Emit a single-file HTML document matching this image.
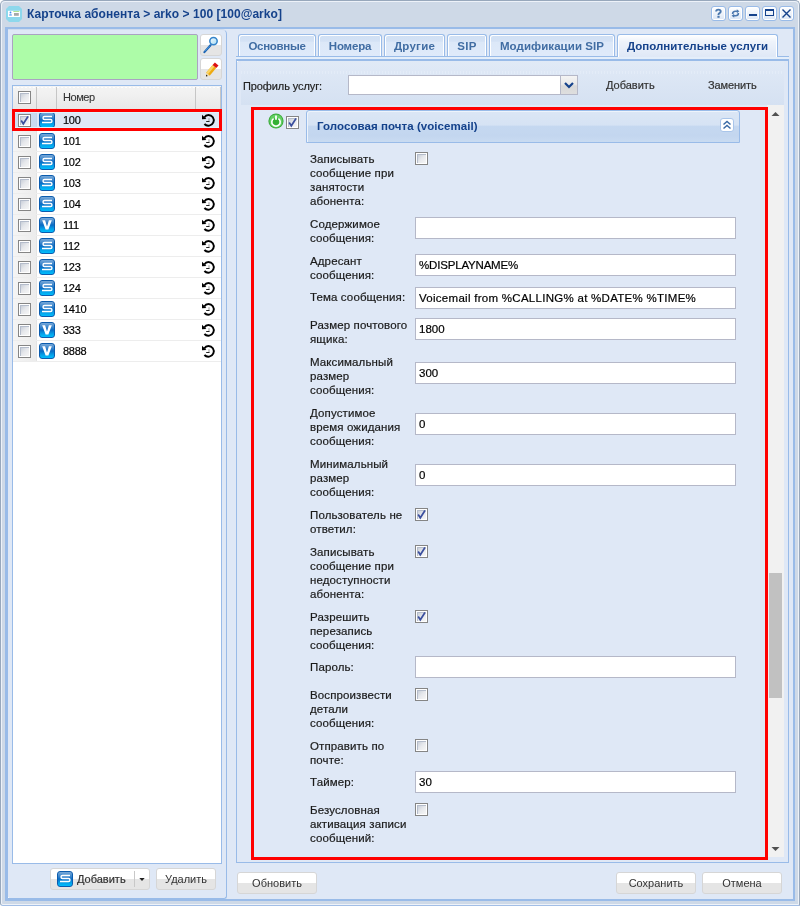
<!DOCTYPE html><html><head><meta charset="utf-8"><style>
*{box-sizing:border-box;margin:0;padding:0}
html,body{width:800px;height:906px;overflow:hidden;background:#fff}
body{font-family:"Liberation Sans",sans-serif;font-size:11px;color:#000;position:relative}
.a{position:absolute}
.t{position:absolute;white-space:nowrap;line-height:14px;will-change:transform;-webkit-text-stroke:0.2px currentColor}
.b{font-weight:bold;-webkit-text-stroke:0}
.cb{position:absolute;width:13px;height:13px;border:1px solid #858585;background:#fff}
.cb::after{content:'';position:absolute;left:1px;top:1px;width:9px;height:9px;box-sizing:border-box;border-top:1px solid #b4bccb;border-left:1px solid #b4bccb;background:linear-gradient(135deg,#c9cfd9 0%,#e6e8ec 45%,#f6f6f6 100%)}
.fld{position:absolute;height:22px;background:#fff;border:1px solid #b5b8c8}
.btn{position:absolute;will-change:transform;height:22px;border:1px solid #d6d6d6;border-radius:3px;background:linear-gradient(#fff 0,#fff 50%,#e5e5e5 50%,#e5e5e5 100%);color:#333;line-height:20px;text-align:center;white-space:nowrap}
.tb{position:absolute;width:15px;height:15px;top:6px;border:1px solid #99bbe8;border-radius:3px;background:linear-gradient(#fff,#dbe6f5);box-shadow:inset 0 0 0 1px #fff}
.tab{position:absolute;will-change:transform;top:34px;height:22px;border:1px solid #99bbe8;border-bottom:none;border-radius:3px 3px 0 0;background:linear-gradient(#d1e0f4 0,#d4e2f5 30%,#dce8f8 34%,#dfeafa 100%);box-shadow:inset 1px 1px 0 #fff,inset -1px 0 0 #fff;color:#416da3;font-weight:bold;text-align:center;line-height:22px;white-space:nowrap}
</style></head><body>
<div class="a" style="left:0;top:0;width:800px;height:906px;background:#ced9e7;border:1px solid #98a8bc;border-bottom-color:#a2bee6;border-radius:5px 5px 0 3px"></div>
<div class="a" style="left:1px;top:1px;width:798px;height:904px;border:1px solid #edf2f9;border-radius:4px 4px 0 2px"></div>
<svg class="a" style="left:6px;top:6px" width="16" height="16" viewBox="0 0 16 16"><path d="M3 0H13L16 3V13L13 16H3L0 13V3Z" fill="#8dd8ec"/><rect x="2" y="4.8" width="12" height="6.2" fill="#fff"/><circle cx="4.5" cy="6.4" r="0.9" fill="#3f8ff0"/><path d="M3.1 9.8Q3.1 7.6 4.5 7.6Q5.9 7.6 5.9 9.8Z" fill="#7fb2f5"/><rect x="7.3" y="5.1" width="6" height="0.9" fill="#a6e28a"/><rect x="8" y="7" width="4.8" height="2.8" fill="#a8a8a8"/></svg>
<div class="t b" style="left:27px;top:7px;font-size:12px;color:#15428b;letter-spacing:0.04px">Карточка абонента &gt; arko &gt; 100 [100@arko]</div>
<div class="tb" style="left:711px"></div>
<div class="tb" style="left:728px"></div>
<div class="tb" style="left:745px"></div>
<div class="tb" style="left:762px"></div>
<div class="tb" style="left:779px"></div>
<svg class="a" style="left:711px;top:6px" width="15" height="15" viewBox="0 0 15 15"><path d="M5.1 5.6Q5.1 3.6 7.4 3.6Q9.7 3.6 9.7 5.4Q9.7 6.5 8.5 7.1Q7.5 7.6 7.5 8.6V9.2" fill="none" stroke="#4b78ae" stroke-width="1.9"/><rect x="6.4" y="10" width="2.2" height="1.8" fill="#4b78ae"/></svg>
<svg class="a" style="left:728px;top:6px" width="15" height="15" viewBox="0 0 15 15"><path d="M4.6 8Q4.6 5.2 7.4 5.2H9" fill="none" stroke="#4b78ae" stroke-width="1.6"/><path d="M8.8 3.2L11.4 5.2L8.8 7.2Z" fill="#4b78ae"/><path d="M10.4 7Q10.4 9.8 7.6 9.8H6" fill="none" stroke="#4b78ae" stroke-width="1.6"/><path d="M6.2 7.8L3.6 9.8L6.2 11.8Z" fill="#4b78ae"/></svg>
<div class="a" style="left:749px;top:14px;width:8px;height:2px;background:#15428b"></div>
<div class="a" style="left:765px;top:9px;width:9px;height:7px;border:1px solid #15428b;border-top-width:2px"></div>
<svg class="a" style="left:782px;top:9px" width="9" height="9" viewBox="0 0 9 9"><path d="M0.5 0.5L8.5 8.5M8.5 0.5L0.5 8.5" stroke="#15428b" stroke-width="1.4"/></svg>
<div class="a" style="left:5px;top:27px;width:790px;height:874px;background:#dfe8f6;border:solid #99bbe8;border-width:2px 2px 2px 3px"></div>
<div class="a" style="left:8px;top:29px;width:219px;height:870px;border-right:1px solid #99bbe8;border-bottom:1px solid #99bbe8;border-top:1px solid #cfdcee;border-radius:0 5px 3px 0"></div>
<div class="a" style="left:8px;top:897px;width:1px;height:1px;background:#f4f8fd"></div>
<div class="a" style="left:12px;top:34px;width:186px;height:46px;background:#adfca8;border:1px solid #aaa3c2;border-radius:2px"></div>
<div class="btn" style="left:200px;top:34px;width:22px;height:22px"></div>
<div class="btn" style="left:200px;top:58px;width:22px;height:22px"></div>
<svg class="a" style="left:198px;top:32px" width="26" height="26" viewBox="0 0 26 26"><defs><linearGradient id="lg" x1="0" y1="0" x2="1" y2="1"><stop offset="0" stop-color="#f4fbff"/><stop offset="1" stop-color="#a9dcf2"/></linearGradient></defs><circle cx="15.5" cy="9.1" r="3.7" fill="url(#lg)" stroke="#3584ca" stroke-width="1.5"/><path d="M6.4 20.1L12.5 13.3" stroke="#1a62b2" stroke-width="2.1" stroke-linecap="round"/><path d="M6.9 19.3L11.9 13.7" stroke="#5aa6e6" stroke-width="0.7"/></svg>
<svg class="a" style="left:198px;top:56px" width="26" height="26" viewBox="0 0 26 26"><path d="M8.1 16.7L11.7 19.7L18.2 12.1L14.6 9.1Z" fill="#eeaa10"/><path d="M8.1 16.7L9.9 18.2L16.4 10.6L14.6 9.1Z" fill="#f9d466"/><path d="M8 20.5L8.1 16.7L11.7 19.7Z" fill="#f1dcae"/><path d="M8 20.5L8.05 18.6L9.85 20.1Z" fill="#1a1a1a"/><path d="M14.6 9.1L18.2 12.1L20.5 9.4L16.9 6.4Z" fill="#dd1010"/></svg>
<div class="a" style="left:12px;top:85px;width:210px;height:779px;background:#fff;border:1px solid #99bbe8"></div>
<div class="a" style="left:13px;top:86px;width:208px;height:23px;background:linear-gradient(#f4f4f4,#f0f0f0 40%,#e8e8e8 100%)"></div>
<div class="a" style="left:13px;top:87px;width:208px;height:1px;background:repeating-linear-gradient(90deg,#fff 0,#fff 2px,transparent 2px,transparent 4px);opacity:0.8"></div>
<div class="a" style="left:36px;top:87px;width:1px;height:22px;background:#c6c6c6"></div>
<div class="a" style="left:56px;top:87px;width:1px;height:22px;background:#c6c6c6"></div>
<div class="a" style="left:195px;top:87px;width:1px;height:22px;background:#c6c6c6"></div>
<div class="a" style="left:220px;top:87px;width:1px;height:22px;background:#c6c6c6"></div>
<div class="cb" style="left:18px;top:91px"></div>
<div class="t" style="left:63px;top:90px;color:#333;letter-spacing:-0.45px;-webkit-text-stroke:0.1px #333">Номер</div>
<div class="a" style="left:13px;top:109px;width:208px;height:21px;background:#dfe8f6"></div>
<div class="a" style="left:13px;top:110px;width:23px;height:20px;background:linear-gradient(90deg,#cfdff2,#c9daf0)"></div>
<div class="a" style="left:36px;top:110px;width:1px;height:20px;background:#c5d6ee"></div>
<div class="a" style="left:13px;top:130px;width:208px;height:1px;background:#ededed"></div>
<div class="cb" style="left:18px;top:114px"></div><svg class="a" style="left:18px;top:114px" width="13" height="13" viewBox="0 0 13 13"><path d="M3.2 6.5L5.3 9.8L10 2.5" fill="none" stroke="#3b4f9e" stroke-width="1.7"/></svg>
<div class="a" style="left:39px;top:112px;width:16px;height:16px;border:1px solid #0b5cae;border-radius:3px;background:linear-gradient(#78a8d8 0%,#3b86cc 30%,#0a6bc4 50%,#05a2ea 78%,#00bdfc 100%);overflow:hidden"><svg width="16" height="16" viewBox="0 0 16 16" style="position:absolute;left:-1px;top:-1px"><path d="M13 4.5H5.5Q4 4.5 4 6Q4 7.5 5.5 7.5H11.5Q13 7.5 13 9Q13 10.5 11.5 10.5H3" fill="none" stroke="#fff" stroke-width="1.4"/></svg></div>
<div class="t" style="left:63px;top:113px;color:#000;letter-spacing:-0.3px">100</div>
<svg class="a" style="left:201px;top:112px" width="16" height="16" viewBox="0 0 16 16"><path d="M3.3 5.6Q4.9 2.95 7.25 2.95A5.4 5.4 0 1 1 3.4 12" fill="none" stroke="#000" stroke-width="1.9"/><path d="M1 2.8L1 7.3L5.4 6.9Z" fill="#000"/><path d="M8 6.2V9.5" fill="none" stroke="#999" stroke-width="1"/><path d="M5.2 9.5H8.5" fill="none" stroke="#222" stroke-width="1"/></svg>
<div class="a" style="left:13px;top:131px;width:208px;height:20px;background:#fff"></div>
<div class="a" style="left:13px;top:131px;width:23px;height:20px;background:linear-gradient(90deg,#f5f5f5,#ececec)"></div>
<div class="a" style="left:36px;top:131px;width:1px;height:20px;background:#e3e3e3"></div>
<div class="a" style="left:13px;top:151px;width:208px;height:1px;background:#ededed"></div>
<div class="cb" style="left:18px;top:135px"></div>
<div class="a" style="left:39px;top:133px;width:16px;height:16px;border:1px solid #0b5cae;border-radius:3px;background:linear-gradient(#78a8d8 0%,#3b86cc 30%,#0a6bc4 50%,#05a2ea 78%,#00bdfc 100%);overflow:hidden"><svg width="16" height="16" viewBox="0 0 16 16" style="position:absolute;left:-1px;top:-1px"><path d="M13 4.5H5.5Q4 4.5 4 6Q4 7.5 5.5 7.5H11.5Q13 7.5 13 9Q13 10.5 11.5 10.5H3" fill="none" stroke="#fff" stroke-width="1.4"/></svg></div>
<div class="t" style="left:63px;top:134px;color:#000;letter-spacing:-0.3px">101</div>
<svg class="a" style="left:201px;top:133px" width="16" height="16" viewBox="0 0 16 16"><path d="M3.3 5.6Q4.9 2.95 7.25 2.95A5.4 5.4 0 1 1 3.4 12" fill="none" stroke="#000" stroke-width="1.9"/><path d="M1 2.8L1 7.3L5.4 6.9Z" fill="#000"/><path d="M8 6.2V9.5" fill="none" stroke="#999" stroke-width="1"/><path d="M5.2 9.5H8.5" fill="none" stroke="#222" stroke-width="1"/></svg>
<div class="a" style="left:13px;top:152px;width:208px;height:20px;background:#fff"></div>
<div class="a" style="left:13px;top:152px;width:23px;height:20px;background:linear-gradient(90deg,#f5f5f5,#ececec)"></div>
<div class="a" style="left:36px;top:152px;width:1px;height:20px;background:#e3e3e3"></div>
<div class="a" style="left:13px;top:172px;width:208px;height:1px;background:#ededed"></div>
<div class="cb" style="left:18px;top:156px"></div>
<div class="a" style="left:39px;top:154px;width:16px;height:16px;border:1px solid #0b5cae;border-radius:3px;background:linear-gradient(#78a8d8 0%,#3b86cc 30%,#0a6bc4 50%,#05a2ea 78%,#00bdfc 100%);overflow:hidden"><svg width="16" height="16" viewBox="0 0 16 16" style="position:absolute;left:-1px;top:-1px"><path d="M13 4.5H5.5Q4 4.5 4 6Q4 7.5 5.5 7.5H11.5Q13 7.5 13 9Q13 10.5 11.5 10.5H3" fill="none" stroke="#fff" stroke-width="1.4"/></svg></div>
<div class="t" style="left:63px;top:155px;color:#000;letter-spacing:-0.3px">102</div>
<svg class="a" style="left:201px;top:154px" width="16" height="16" viewBox="0 0 16 16"><path d="M3.3 5.6Q4.9 2.95 7.25 2.95A5.4 5.4 0 1 1 3.4 12" fill="none" stroke="#000" stroke-width="1.9"/><path d="M1 2.8L1 7.3L5.4 6.9Z" fill="#000"/><path d="M8 6.2V9.5" fill="none" stroke="#999" stroke-width="1"/><path d="M5.2 9.5H8.5" fill="none" stroke="#222" stroke-width="1"/></svg>
<div class="a" style="left:13px;top:173px;width:208px;height:20px;background:#fff"></div>
<div class="a" style="left:13px;top:173px;width:23px;height:20px;background:linear-gradient(90deg,#f5f5f5,#ececec)"></div>
<div class="a" style="left:36px;top:173px;width:1px;height:20px;background:#e3e3e3"></div>
<div class="a" style="left:13px;top:193px;width:208px;height:1px;background:#ededed"></div>
<div class="cb" style="left:18px;top:177px"></div>
<div class="a" style="left:39px;top:175px;width:16px;height:16px;border:1px solid #0b5cae;border-radius:3px;background:linear-gradient(#78a8d8 0%,#3b86cc 30%,#0a6bc4 50%,#05a2ea 78%,#00bdfc 100%);overflow:hidden"><svg width="16" height="16" viewBox="0 0 16 16" style="position:absolute;left:-1px;top:-1px"><path d="M13 4.5H5.5Q4 4.5 4 6Q4 7.5 5.5 7.5H11.5Q13 7.5 13 9Q13 10.5 11.5 10.5H3" fill="none" stroke="#fff" stroke-width="1.4"/></svg></div>
<div class="t" style="left:63px;top:176px;color:#000;letter-spacing:-0.3px">103</div>
<svg class="a" style="left:201px;top:175px" width="16" height="16" viewBox="0 0 16 16"><path d="M3.3 5.6Q4.9 2.95 7.25 2.95A5.4 5.4 0 1 1 3.4 12" fill="none" stroke="#000" stroke-width="1.9"/><path d="M1 2.8L1 7.3L5.4 6.9Z" fill="#000"/><path d="M8 6.2V9.5" fill="none" stroke="#999" stroke-width="1"/><path d="M5.2 9.5H8.5" fill="none" stroke="#222" stroke-width="1"/></svg>
<div class="a" style="left:13px;top:194px;width:208px;height:20px;background:#fff"></div>
<div class="a" style="left:13px;top:194px;width:23px;height:20px;background:linear-gradient(90deg,#f5f5f5,#ececec)"></div>
<div class="a" style="left:36px;top:194px;width:1px;height:20px;background:#e3e3e3"></div>
<div class="a" style="left:13px;top:214px;width:208px;height:1px;background:#ededed"></div>
<div class="cb" style="left:18px;top:198px"></div>
<div class="a" style="left:39px;top:196px;width:16px;height:16px;border:1px solid #0b5cae;border-radius:3px;background:linear-gradient(#78a8d8 0%,#3b86cc 30%,#0a6bc4 50%,#05a2ea 78%,#00bdfc 100%);overflow:hidden"><svg width="16" height="16" viewBox="0 0 16 16" style="position:absolute;left:-1px;top:-1px"><path d="M13 4.5H5.5Q4 4.5 4 6Q4 7.5 5.5 7.5H11.5Q13 7.5 13 9Q13 10.5 11.5 10.5H3" fill="none" stroke="#fff" stroke-width="1.4"/></svg></div>
<div class="t" style="left:63px;top:197px;color:#000;letter-spacing:-0.3px">104</div>
<svg class="a" style="left:201px;top:196px" width="16" height="16" viewBox="0 0 16 16"><path d="M3.3 5.6Q4.9 2.95 7.25 2.95A5.4 5.4 0 1 1 3.4 12" fill="none" stroke="#000" stroke-width="1.9"/><path d="M1 2.8L1 7.3L5.4 6.9Z" fill="#000"/><path d="M8 6.2V9.5" fill="none" stroke="#999" stroke-width="1"/><path d="M5.2 9.5H8.5" fill="none" stroke="#222" stroke-width="1"/></svg>
<div class="a" style="left:13px;top:215px;width:208px;height:20px;background:#fff"></div>
<div class="a" style="left:13px;top:215px;width:23px;height:20px;background:linear-gradient(90deg,#f5f5f5,#ececec)"></div>
<div class="a" style="left:36px;top:215px;width:1px;height:20px;background:#e3e3e3"></div>
<div class="a" style="left:13px;top:235px;width:208px;height:1px;background:#ededed"></div>
<div class="cb" style="left:18px;top:219px"></div>
<div class="a" style="left:39px;top:217px;width:16px;height:16px;border:1px solid #0b5cae;border-radius:3px;background:linear-gradient(#78a8d8 0%,#3b86cc 30%,#0a6bc4 50%,#05a2ea 78%,#00bdfc 100%);overflow:hidden"><svg width="16" height="16" viewBox="0 0 16 16" style="position:absolute;left:-1px;top:-1px"><path d="M3.2 3.2H6.1L8 9.4L9.9 3.2H12.8L9.4 12.4H6.6Z" fill="#fff"/></svg></div>
<div class="t" style="left:63px;top:218px;color:#000;letter-spacing:-0.3px">111</div>
<svg class="a" style="left:201px;top:217px" width="16" height="16" viewBox="0 0 16 16"><path d="M3.3 5.6Q4.9 2.95 7.25 2.95A5.4 5.4 0 1 1 3.4 12" fill="none" stroke="#000" stroke-width="1.9"/><path d="M1 2.8L1 7.3L5.4 6.9Z" fill="#000"/><path d="M8 6.2V9.5" fill="none" stroke="#999" stroke-width="1"/><path d="M5.2 9.5H8.5" fill="none" stroke="#222" stroke-width="1"/></svg>
<div class="a" style="left:13px;top:236px;width:208px;height:20px;background:#fff"></div>
<div class="a" style="left:13px;top:236px;width:23px;height:20px;background:linear-gradient(90deg,#f5f5f5,#ececec)"></div>
<div class="a" style="left:36px;top:236px;width:1px;height:20px;background:#e3e3e3"></div>
<div class="a" style="left:13px;top:256px;width:208px;height:1px;background:#ededed"></div>
<div class="cb" style="left:18px;top:240px"></div>
<div class="a" style="left:39px;top:238px;width:16px;height:16px;border:1px solid #0b5cae;border-radius:3px;background:linear-gradient(#78a8d8 0%,#3b86cc 30%,#0a6bc4 50%,#05a2ea 78%,#00bdfc 100%);overflow:hidden"><svg width="16" height="16" viewBox="0 0 16 16" style="position:absolute;left:-1px;top:-1px"><path d="M13 4.5H5.5Q4 4.5 4 6Q4 7.5 5.5 7.5H11.5Q13 7.5 13 9Q13 10.5 11.5 10.5H3" fill="none" stroke="#fff" stroke-width="1.4"/></svg></div>
<div class="t" style="left:63px;top:239px;color:#000;letter-spacing:-0.3px">112</div>
<svg class="a" style="left:201px;top:238px" width="16" height="16" viewBox="0 0 16 16"><path d="M3.3 5.6Q4.9 2.95 7.25 2.95A5.4 5.4 0 1 1 3.4 12" fill="none" stroke="#000" stroke-width="1.9"/><path d="M1 2.8L1 7.3L5.4 6.9Z" fill="#000"/><path d="M8 6.2V9.5" fill="none" stroke="#999" stroke-width="1"/><path d="M5.2 9.5H8.5" fill="none" stroke="#222" stroke-width="1"/></svg>
<div class="a" style="left:13px;top:257px;width:208px;height:20px;background:#fff"></div>
<div class="a" style="left:13px;top:257px;width:23px;height:20px;background:linear-gradient(90deg,#f5f5f5,#ececec)"></div>
<div class="a" style="left:36px;top:257px;width:1px;height:20px;background:#e3e3e3"></div>
<div class="a" style="left:13px;top:277px;width:208px;height:1px;background:#ededed"></div>
<div class="cb" style="left:18px;top:261px"></div>
<div class="a" style="left:39px;top:259px;width:16px;height:16px;border:1px solid #0b5cae;border-radius:3px;background:linear-gradient(#78a8d8 0%,#3b86cc 30%,#0a6bc4 50%,#05a2ea 78%,#00bdfc 100%);overflow:hidden"><svg width="16" height="16" viewBox="0 0 16 16" style="position:absolute;left:-1px;top:-1px"><path d="M13 4.5H5.5Q4 4.5 4 6Q4 7.5 5.5 7.5H11.5Q13 7.5 13 9Q13 10.5 11.5 10.5H3" fill="none" stroke="#fff" stroke-width="1.4"/></svg></div>
<div class="t" style="left:63px;top:260px;color:#000;letter-spacing:-0.3px">123</div>
<svg class="a" style="left:201px;top:259px" width="16" height="16" viewBox="0 0 16 16"><path d="M3.3 5.6Q4.9 2.95 7.25 2.95A5.4 5.4 0 1 1 3.4 12" fill="none" stroke="#000" stroke-width="1.9"/><path d="M1 2.8L1 7.3L5.4 6.9Z" fill="#000"/><path d="M8 6.2V9.5" fill="none" stroke="#999" stroke-width="1"/><path d="M5.2 9.5H8.5" fill="none" stroke="#222" stroke-width="1"/></svg>
<div class="a" style="left:13px;top:278px;width:208px;height:20px;background:#fff"></div>
<div class="a" style="left:13px;top:278px;width:23px;height:20px;background:linear-gradient(90deg,#f5f5f5,#ececec)"></div>
<div class="a" style="left:36px;top:278px;width:1px;height:20px;background:#e3e3e3"></div>
<div class="a" style="left:13px;top:298px;width:208px;height:1px;background:#ededed"></div>
<div class="cb" style="left:18px;top:282px"></div>
<div class="a" style="left:39px;top:280px;width:16px;height:16px;border:1px solid #0b5cae;border-radius:3px;background:linear-gradient(#78a8d8 0%,#3b86cc 30%,#0a6bc4 50%,#05a2ea 78%,#00bdfc 100%);overflow:hidden"><svg width="16" height="16" viewBox="0 0 16 16" style="position:absolute;left:-1px;top:-1px"><path d="M13 4.5H5.5Q4 4.5 4 6Q4 7.5 5.5 7.5H11.5Q13 7.5 13 9Q13 10.5 11.5 10.5H3" fill="none" stroke="#fff" stroke-width="1.4"/></svg></div>
<div class="t" style="left:63px;top:281px;color:#000;letter-spacing:-0.3px">124</div>
<svg class="a" style="left:201px;top:280px" width="16" height="16" viewBox="0 0 16 16"><path d="M3.3 5.6Q4.9 2.95 7.25 2.95A5.4 5.4 0 1 1 3.4 12" fill="none" stroke="#000" stroke-width="1.9"/><path d="M1 2.8L1 7.3L5.4 6.9Z" fill="#000"/><path d="M8 6.2V9.5" fill="none" stroke="#999" stroke-width="1"/><path d="M5.2 9.5H8.5" fill="none" stroke="#222" stroke-width="1"/></svg>
<div class="a" style="left:13px;top:299px;width:208px;height:20px;background:#fff"></div>
<div class="a" style="left:13px;top:299px;width:23px;height:20px;background:linear-gradient(90deg,#f5f5f5,#ececec)"></div>
<div class="a" style="left:36px;top:299px;width:1px;height:20px;background:#e3e3e3"></div>
<div class="a" style="left:13px;top:319px;width:208px;height:1px;background:#ededed"></div>
<div class="cb" style="left:18px;top:303px"></div>
<div class="a" style="left:39px;top:301px;width:16px;height:16px;border:1px solid #0b5cae;border-radius:3px;background:linear-gradient(#78a8d8 0%,#3b86cc 30%,#0a6bc4 50%,#05a2ea 78%,#00bdfc 100%);overflow:hidden"><svg width="16" height="16" viewBox="0 0 16 16" style="position:absolute;left:-1px;top:-1px"><path d="M13 4.5H5.5Q4 4.5 4 6Q4 7.5 5.5 7.5H11.5Q13 7.5 13 9Q13 10.5 11.5 10.5H3" fill="none" stroke="#fff" stroke-width="1.4"/></svg></div>
<div class="t" style="left:63px;top:302px;color:#000;letter-spacing:-0.3px">1410</div>
<svg class="a" style="left:201px;top:301px" width="16" height="16" viewBox="0 0 16 16"><path d="M3.3 5.6Q4.9 2.95 7.25 2.95A5.4 5.4 0 1 1 3.4 12" fill="none" stroke="#000" stroke-width="1.9"/><path d="M1 2.8L1 7.3L5.4 6.9Z" fill="#000"/><path d="M8 6.2V9.5" fill="none" stroke="#999" stroke-width="1"/><path d="M5.2 9.5H8.5" fill="none" stroke="#222" stroke-width="1"/></svg>
<div class="a" style="left:13px;top:320px;width:208px;height:20px;background:#fff"></div>
<div class="a" style="left:13px;top:320px;width:23px;height:20px;background:linear-gradient(90deg,#f5f5f5,#ececec)"></div>
<div class="a" style="left:36px;top:320px;width:1px;height:20px;background:#e3e3e3"></div>
<div class="a" style="left:13px;top:340px;width:208px;height:1px;background:#ededed"></div>
<div class="cb" style="left:18px;top:324px"></div>
<div class="a" style="left:39px;top:322px;width:16px;height:16px;border:1px solid #0b5cae;border-radius:3px;background:linear-gradient(#78a8d8 0%,#3b86cc 30%,#0a6bc4 50%,#05a2ea 78%,#00bdfc 100%);overflow:hidden"><svg width="16" height="16" viewBox="0 0 16 16" style="position:absolute;left:-1px;top:-1px"><path d="M3.2 3.2H6.1L8 9.4L9.9 3.2H12.8L9.4 12.4H6.6Z" fill="#fff"/></svg></div>
<div class="t" style="left:63px;top:323px;color:#000;letter-spacing:-0.3px">333</div>
<svg class="a" style="left:201px;top:322px" width="16" height="16" viewBox="0 0 16 16"><path d="M3.3 5.6Q4.9 2.95 7.25 2.95A5.4 5.4 0 1 1 3.4 12" fill="none" stroke="#000" stroke-width="1.9"/><path d="M1 2.8L1 7.3L5.4 6.9Z" fill="#000"/><path d="M8 6.2V9.5" fill="none" stroke="#999" stroke-width="1"/><path d="M5.2 9.5H8.5" fill="none" stroke="#222" stroke-width="1"/></svg>
<div class="a" style="left:13px;top:341px;width:208px;height:20px;background:#fff"></div>
<div class="a" style="left:13px;top:341px;width:23px;height:20px;background:linear-gradient(90deg,#f5f5f5,#ececec)"></div>
<div class="a" style="left:36px;top:341px;width:1px;height:20px;background:#e3e3e3"></div>
<div class="a" style="left:13px;top:361px;width:208px;height:1px;background:#ededed"></div>
<div class="cb" style="left:18px;top:345px"></div>
<div class="a" style="left:39px;top:343px;width:16px;height:16px;border:1px solid #0b5cae;border-radius:3px;background:linear-gradient(#78a8d8 0%,#3b86cc 30%,#0a6bc4 50%,#05a2ea 78%,#00bdfc 100%);overflow:hidden"><svg width="16" height="16" viewBox="0 0 16 16" style="position:absolute;left:-1px;top:-1px"><path d="M3.2 3.2H6.1L8 9.4L9.9 3.2H12.8L9.4 12.4H6.6Z" fill="#fff"/></svg></div>
<div class="t" style="left:63px;top:344px;color:#000;letter-spacing:-0.3px">8888</div>
<svg class="a" style="left:201px;top:343px" width="16" height="16" viewBox="0 0 16 16"><path d="M3.3 5.6Q4.9 2.95 7.25 2.95A5.4 5.4 0 1 1 3.4 12" fill="none" stroke="#000" stroke-width="1.9"/><path d="M1 2.8L1 7.3L5.4 6.9Z" fill="#000"/><path d="M8 6.2V9.5" fill="none" stroke="#999" stroke-width="1"/><path d="M5.2 9.5H8.5" fill="none" stroke="#222" stroke-width="1"/></svg>
<div class="a" style="left:15px;top:112px;width:206px;height:1px;background:#dcf4fe"></div>
<div class="a" style="left:15px;top:127px;width:206px;height:1px;background:#dcf4fe"></div>
<div class="a" style="left:12px;top:109px;width:210px;height:22px;border:3px solid #f00"></div>
<div class="btn" style="left:50px;top:868px;width:100px;height:22px;text-align:left"></div>
<div class="a" style="left:57px;top:871px;width:16px;height:16px;border:1px solid #0b5cae;border-radius:3px;background:linear-gradient(#78a8d8 0%,#3b86cc 30%,#0a6bc4 50%,#05a2ea 78%,#00bdfc 100%);overflow:hidden"><svg width="16" height="16" viewBox="0 0 16 16" style="position:absolute;left:-1px;top:-1px"><path d="M13 4.5H5.5Q4 4.5 4 6Q4 7.5 5.5 7.5H11.5Q13 7.5 13 9Q13 10.5 11.5 10.5H3" fill="none" stroke="#fff" stroke-width="1.4"/></svg></div>
<div class="t" style="left:77px;top:872px;color:#333">Добавить</div>
<div class="a" style="left:134px;top:871px;width:1px;height:16px;background:#c8c8c8"></div>
<svg class="a" style="left:139px;top:877px" width="6" height="5" viewBox="0 0 6 5"><path d="M0.3 1H5.7L3 4Z" fill="#222"/></svg>
<div class="btn" style="left:156px;top:868px;width:60px;height:22px">Удалить</div>
<div class="a" style="left:236px;top:56px;width:553px;height:1px;background:#99bbe8"></div>
<div class="a" style="left:236px;top:57px;width:553px;height:2px;background:#e4eefa"></div>
<div class="a" style="left:236px;top:59px;width:553px;height:804px;border:1px solid #99bbe8;border-top-width:2px;background:#dfe8f6"></div>
<div class="a" style="left:237px;top:61px;width:1px;height:1px;background:#fff"></div>
<div class="tab" style="left:238px;width:78px;font-size:11.5px;letter-spacing:-0.31px">Основные</div>
<div class="tab" style="left:318px;width:64px;font-size:11.5px;letter-spacing:-0.18px">Номера</div>
<div class="tab" style="left:384px;width:61px;font-size:11.5px;letter-spacing:0.25px">Другие</div>
<div class="tab" style="left:447px;width:40px;font-size:11.5px;letter-spacing:0.33px">SIP</div>
<div class="tab" style="left:489px;width:126px;font-size:11.5px;letter-spacing:0.07px">Модификации SIP</div>
<div class="tab" style="left:617px;width:161px;height:23px;line-height:22px;background:linear-gradient(#fff 0,#eef3fb 30%,#dfe8f6 100%);color:#15428b;font-size:11.5px;letter-spacing:0px">Дополнительные услуги</div>
<div class="a" style="left:241px;top:61px;width:543px;height:44px;background:linear-gradient(#e1eaf6 0%,#dde7f5 30%,#d5e1f2 100%)"></div>
<div class="a" style="left:241px;top:71px;width:543px;height:3px;background:repeating-linear-gradient(90deg,#e6eef9 0,#e6eef9 1px,transparent 1px,transparent 3px);opacity:0.7"></div>
<div class="t" style="left:243px;top:79px;color:#222;letter-spacing:-0.1px">Профиль услуг:</div>
<div class="fld" style="left:348px;top:75px;width:230px;height:20px"></div>
<div class="a" style="left:560px;top:76px;width:17px;height:18px;border-left:1px solid #b5b8c8;background:linear-gradient(#f4f4f4,#e9e9e9 45%,#d9d9d9 55%,#dedede)"></div>
<svg class="a" style="left:564px;top:82px" width="10" height="7" viewBox="0 0 10 7"><path d="M1 1L5 5L9 1" fill="none" stroke="#15428b" stroke-width="2.2"/></svg>
<div class="t" style="left:606px;top:78px;color:#333;letter-spacing:0px">Добавить</div>
<div class="t" style="left:708px;top:78px;color:#333;letter-spacing:-0.1px">Заменить</div>
<div class="a" style="left:767px;top:105px;width:17px;height:752px;background:#f1f1f1"></div>
<div class="a" style="left:769px;top:573px;width:13px;height:125px;background:#c1c1c1"></div>
<svg class="a" style="left:771px;top:111px" width="9" height="6" viewBox="0 0 9 6"><path d="M0.5 5H8.5L4.5 1Z" fill="#505050"/></svg>
<svg class="a" style="left:771px;top:846px" width="9" height="6" viewBox="0 0 9 6"><path d="M0.5 1H8.5L4.5 5Z" fill="#505050"/></svg>
<div class="a" style="left:306px;top:110px;width:434px;height:33px;border:1px solid #99bbe8;border-radius:3px 3px 0 0;background:linear-gradient(#dbe6f5 0%,#d6e3f4 44%,#d2e0f3 46%,#c5d8f0 50%,#c3d6ef 80%,#c9dbf1 100%);box-shadow:inset 1px 1px 0 #eef4fc"></div>
<div class="t b" style="left:317px;top:119px;font-size:11.5px;color:#15428b;letter-spacing:0.06px">Голосовая почта (voicemail)</div>
<div class="a" style="left:720px;top:118px;width:14px;height:14px;border:1px solid #a9c5ea;border-radius:3px;background:#fff"></div>
<svg class="a" style="left:722px;top:120px" width="10" height="10" viewBox="0 0 10 10"><path d="M1.5 4.5L5 1.5L8.5 4.5M1.5 8.5L5 5.5L8.5 8.5" fill="none" stroke="#3a6aa5" stroke-width="1.5"/></svg>
<svg class="a" style="left:268px;top:113px" width="16" height="16" viewBox="0 0 16 16"><circle cx="8" cy="8" r="7.6" fill="#3aa83a"/><circle cx="8" cy="8" r="6.6" fill="#62d062"/><circle cx="8" cy="8.5" r="3.6" fill="#34b034"/><path d="M5.6 5.6A4.2 4.2 0 1 0 10.4 5.6" fill="none" stroke="#fff" stroke-width="1.6"/><path d="M8 2.6V6.8" stroke="#fff" stroke-width="1.8"/></svg>
<div class="cb" style="left:286px;top:116px"></div><svg class="a" style="left:286px;top:116px" width="13" height="13" viewBox="0 0 13 13"><path d="M3.2 6.5L5.3 9.8L10 2.5" fill="none" stroke="#3b4f9e" stroke-width="1.7"/></svg>
<div class="t" style="left:310px;top:152px;color:#1a1a1a;font-size:11.5px;letter-spacing:0.12px">Записывать<br>сообщение при<br>занятости<br>абонента:</div>
<div class="cb" style="left:415px;top:152px"></div>
<div class="t" style="left:310px;top:217px;color:#1a1a1a;font-size:11.5px;letter-spacing:0.12px">Содержимое<br>сообщения:</div>
<div class="fld" style="left:415px;top:217px;width:321px"></div>
<div class="t" style="left:310px;top:254px;color:#1a1a1a;font-size:11.5px;letter-spacing:0.12px">Адресант<br>сообщения:</div>
<div class="fld" style="left:415px;top:254px;width:321px"></div>
<div class="t" style="left:419px;top:258px;color:#000;font-size:11.5px;letter-spacing:-0.18px">%DISPLAYNAME%</div>
<div class="t" style="left:310px;top:290px;color:#1a1a1a;font-size:11.5px;letter-spacing:0.12px">Тема сообщения:</div>
<div class="fld" style="left:415px;top:287px;width:321px"></div>
<div class="t" style="left:419px;top:291px;color:#000;font-size:11.5px;letter-spacing:0.28px">Voicemail from %CALLING% at %DATE% %TIME%</div>
<div class="t" style="left:310px;top:318px;color:#1a1a1a;font-size:11.5px;letter-spacing:0.12px">Размер почтового<br>ящика:</div>
<div class="fld" style="left:415px;top:318px;width:321px"></div>
<div class="t" style="left:419px;top:322px;color:#000;font-size:11.5px;letter-spacing:0px">1800</div>
<div class="t" style="left:310px;top:355px;color:#1a1a1a;font-size:11.5px;letter-spacing:0.12px">Максимальный<br>размер<br>сообщения:</div>
<div class="fld" style="left:415px;top:362px;width:321px"></div>
<div class="t" style="left:419px;top:366px;color:#000;font-size:11.5px;letter-spacing:0px">300</div>
<div class="t" style="left:310px;top:406px;color:#1a1a1a;font-size:11.5px;letter-spacing:0.12px">Допустимое<br>время ожидания<br>сообщения:</div>
<div class="fld" style="left:415px;top:413px;width:321px"></div>
<div class="t" style="left:419px;top:417px;color:#000;font-size:11.5px;letter-spacing:0px">0</div>
<div class="t" style="left:310px;top:457px;color:#1a1a1a;font-size:11.5px;letter-spacing:0.12px">Минимальный<br>размер<br>сообщения:</div>
<div class="fld" style="left:415px;top:464px;width:321px"></div>
<div class="t" style="left:419px;top:468px;color:#000;font-size:11.5px;letter-spacing:0px">0</div>
<div class="t" style="left:310px;top:508px;color:#1a1a1a;font-size:11.5px;letter-spacing:0.12px">Пользователь не<br>ответил:</div>
<div class="cb" style="left:415px;top:508px"></div><svg class="a" style="left:415px;top:508px" width="13" height="13" viewBox="0 0 13 13"><path d="M3.2 6.5L5.3 9.8L10 2.5" fill="none" stroke="#3b4f9e" stroke-width="1.7"/></svg>
<div class="t" style="left:310px;top:545px;color:#1a1a1a;font-size:11.5px;letter-spacing:0.12px">Записывать<br>сообщение при<br>недоступности<br>абонента:</div>
<div class="cb" style="left:415px;top:545px"></div><svg class="a" style="left:415px;top:545px" width="13" height="13" viewBox="0 0 13 13"><path d="M3.2 6.5L5.3 9.8L10 2.5" fill="none" stroke="#3b4f9e" stroke-width="1.7"/></svg>
<div class="t" style="left:310px;top:610px;color:#1a1a1a;font-size:11.5px;letter-spacing:0.12px">Разрешить<br>перезапись<br>сообщения:</div>
<div class="cb" style="left:415px;top:610px"></div><svg class="a" style="left:415px;top:610px" width="13" height="13" viewBox="0 0 13 13"><path d="M3.2 6.5L5.3 9.8L10 2.5" fill="none" stroke="#3b4f9e" stroke-width="1.7"/></svg>
<div class="t" style="left:310px;top:660px;color:#1a1a1a;font-size:11.5px;letter-spacing:0.12px">Пароль:</div>
<div class="fld" style="left:415px;top:656px;width:321px"></div>
<div class="t" style="left:310px;top:688px;color:#1a1a1a;font-size:11.5px;letter-spacing:0.12px">Воспроизвести<br>детали<br>сообщения:</div>
<div class="cb" style="left:415px;top:688px"></div>
<div class="t" style="left:310px;top:739px;color:#1a1a1a;font-size:11.5px;letter-spacing:0.12px">Отправить по<br>почте:</div>
<div class="cb" style="left:415px;top:739px"></div>
<div class="t" style="left:310px;top:775px;color:#1a1a1a;font-size:11.5px;letter-spacing:0.12px">Таймер:</div>
<div class="fld" style="left:415px;top:771px;width:321px"></div>
<div class="t" style="left:419px;top:775px;color:#000;font-size:11.5px;letter-spacing:0px">30</div>
<div class="t" style="left:310px;top:803px;color:#1a1a1a;font-size:11.5px;letter-spacing:0.12px">Безусловная<br>активация записи<br>сообщений:</div>
<div class="cb" style="left:415px;top:803px"></div>
<div class="a" style="left:251px;top:107px;width:517px;height:753px;border:3px solid #f00"></div>
<div class="btn" style="left:237px;top:872px;width:80px">Обновить</div>
<div class="btn" style="left:616px;top:872px;width:80px">Сохранить</div>
<div class="btn" style="left:702px;top:872px;width:80px">Отмена</div>
</body></html>
